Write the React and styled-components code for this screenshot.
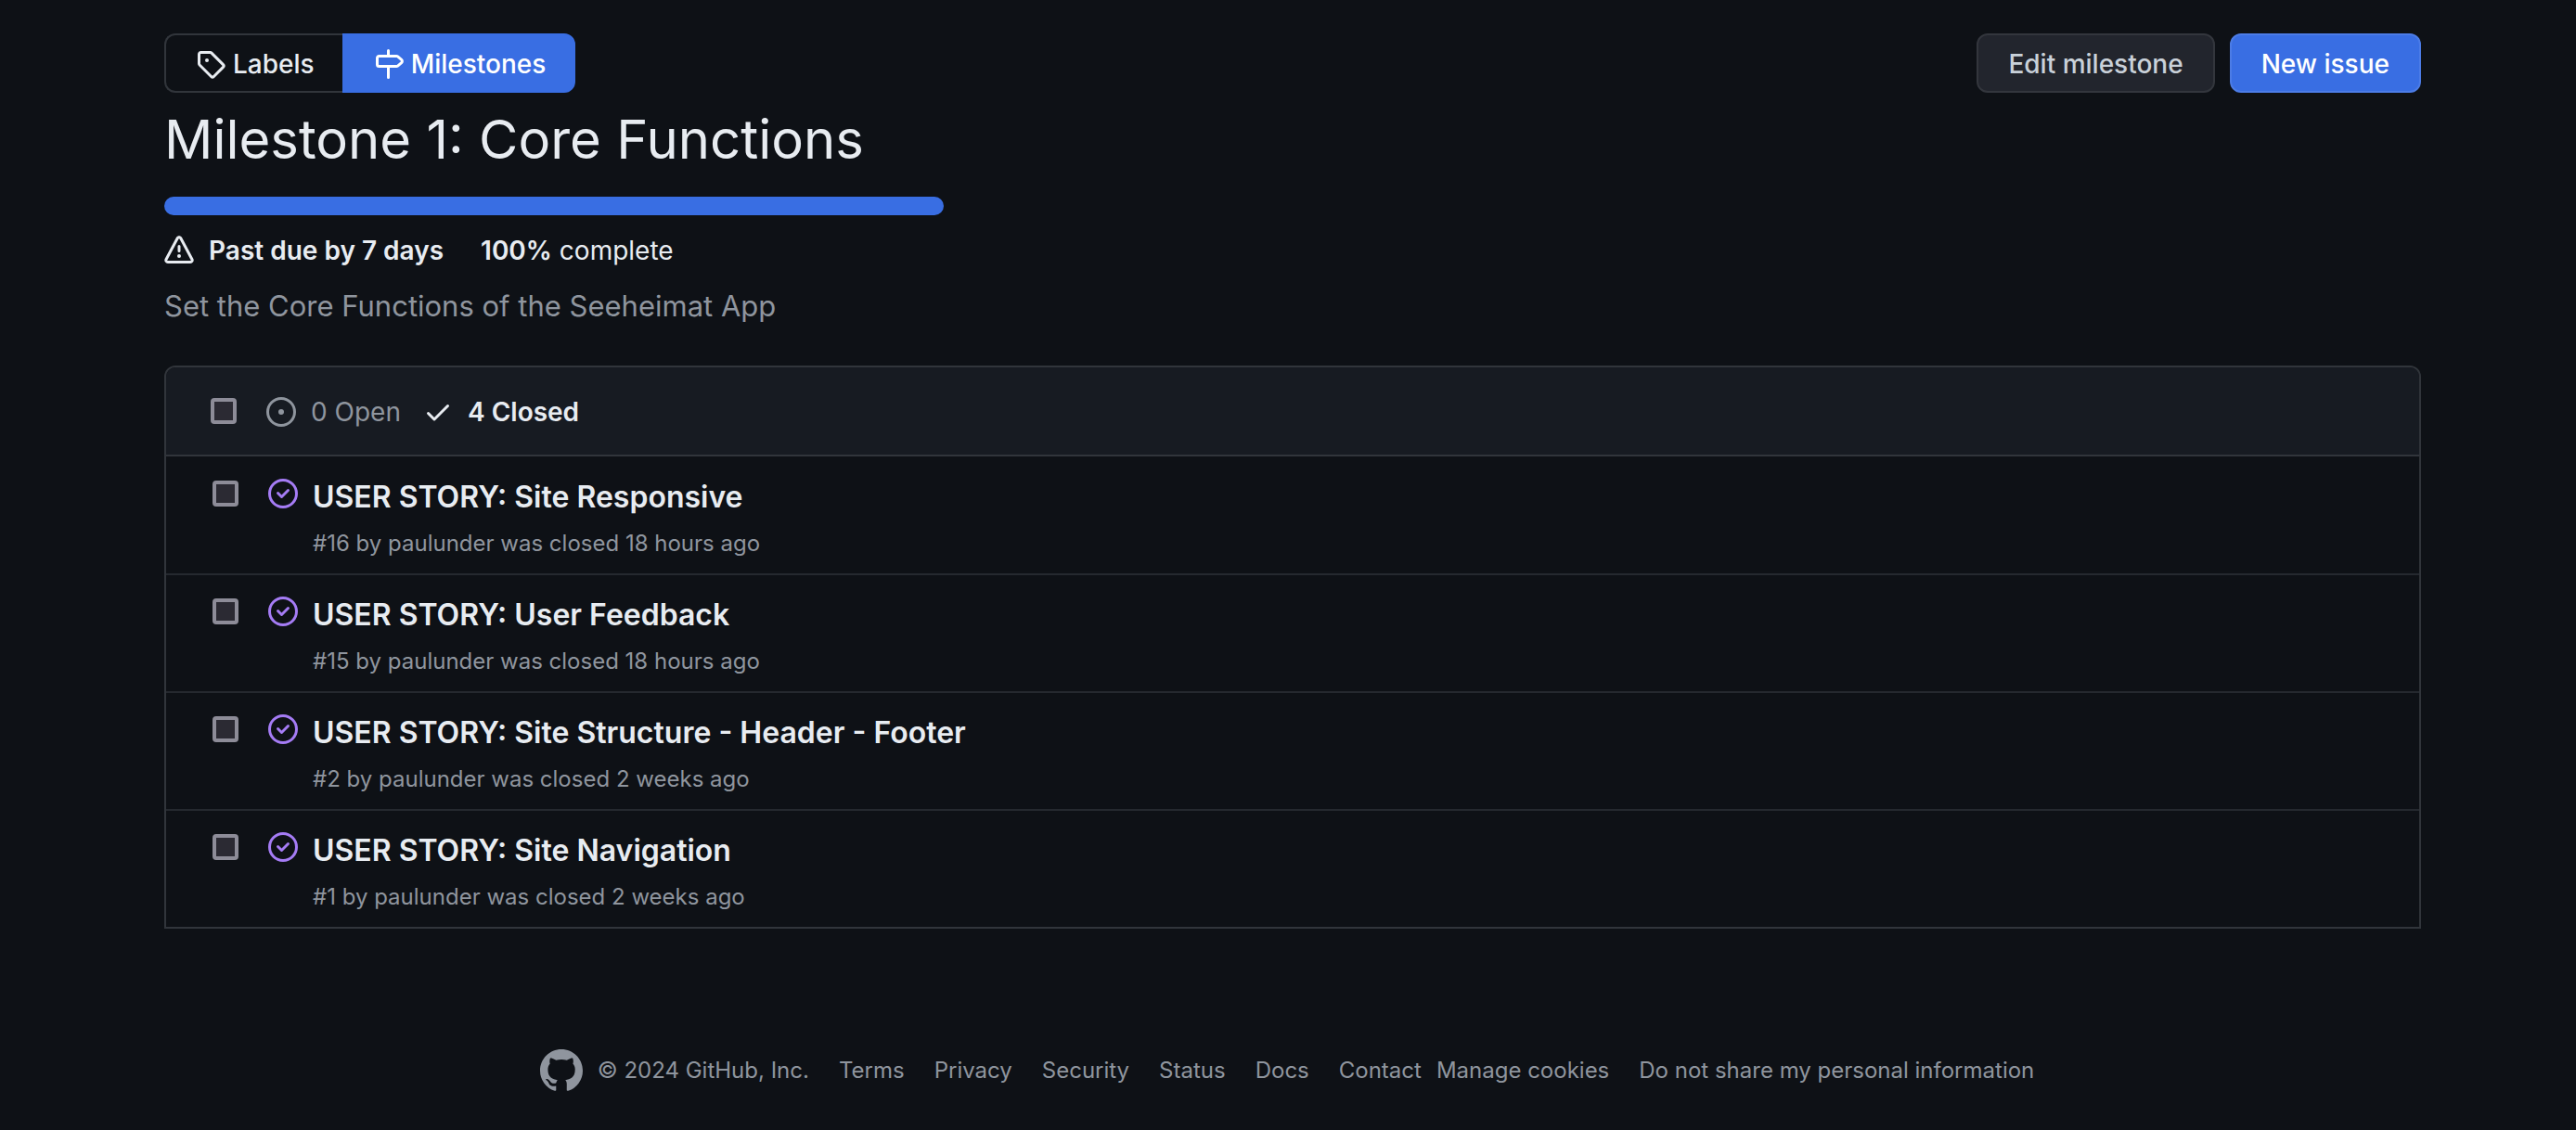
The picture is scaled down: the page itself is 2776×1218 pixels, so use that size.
import React from "react";
import styled, { createGlobalStyle, css } from "styled-components";

const color = {
  canvas: "#0e1116",
  subtle: "#171b22",
  border: "#31353b",
  divider: "#25292f",
  text: "#e8ecf1",
  muted: "#8f959e",
  accent: "#396ee3",
  done: "#a57cf5",
};

const GlobalStyle = createGlobalStyle`
  *, *::before, *::after { box-sizing: border-box; }
  body {
    margin: 0;
    background: ${color.canvas};
    color: ${color.text};
    font-family: Inter, "Liberation Sans", sans-serif;
    font-size: 28px;
    line-height: 40px;
  }
`;

const Page = styled.div`
  max-width: 2560px;
  margin: 0 auto;
  padding: 36px 59px 32px 69px;
`;

const Toolbar = styled.header`
  display: flex;
  flex-wrap: wrap;
  justify-content: space-between;
  gap: 16px;
`;

const Group = styled.nav`
  display: flex;
`;

const Actions = styled.div`
  display: flex;
  gap: 16px;
`;

const controlBase = css`
  display: inline-flex;
  align-items: center;
  gap: 8px;
  height: 64px;
  padding: 2px 32px 0;
  border: 2px solid ${color.border};
  font-family: inherit;
  font-size: 28px;
  font-weight: 550;
  line-height: 40px;
  text-decoration: none;
  white-space: nowrap;
`;

const Tab = styled.a`
  ${controlBase}
  color: ${(p) => (p.$selected ? "#ffffff" : color.text)};
  background: ${(p) => (p.$selected ? color.accent : "transparent")};
  ${(p) => p.$selected && `border-color: ${color.accent};`}
  &:first-child {
    padding-right: 30px;
    border-radius: 12px 0 0 12px;
    border-right: 0;
  }
  &:last-child {
    padding-right: 30px;
    border-radius: 0 12px 12px 0;
  }
`;

const Button = styled.button`
  ${controlBase}
  border-radius: 12px;
  cursor: pointer;
  color: ${(p) => (p.$primary ? "#ffffff" : "#c9d1d9")};
  background: ${(p) => (p.$primary ? color.accent : "#22252d")};
  border-color: ${(p) => (p.$primary ? "#4c7ce6" : "#33363d")};
`;

const Icon = styled.svg`
  display: block;
  flex: none;
  width: ${(p) => p.$size || 32}px;
  height: ${(p) => p.$size || 32}px;
  fill: currentColor;
`;

const Title = styled.h1`
  margin: 8px 0 0;
  font-size: 58px;
  font-weight: 400;
  line-height: 84px;
`;

const Progress = styled.div`
  width: 840px;
  max-width: 100%;
  height: 20px;
  margin-top: 20px;
  border-radius: 12px;
  background: ${color.border};
  overflow: hidden;
`;

const ProgressFill = styled.div`
  height: 100%;
  background: ${color.accent};
`;

const Stats = styled.div`
  display: flex;
  align-items: center;
  gap: 40px;
  margin-top: 18px;
  font-size: 28px;
  line-height: 40px;
`;

const Due = styled.strong`
  display: flex;
  align-items: center;
  gap: 16px;
  font-weight: 600;
`;

const Strong = styled.strong`
  font-weight: 600;
`;

const Description = styled.p`
  margin: 16px 0 0;
  color: ${color.muted};
  font-size: 31px;
  line-height: 48px;
`;

const Box = styled.section`
  margin-top: 40px;
  border: 2px solid ${color.border};
  border-radius: 12px 12px 0 0;
`;

const BoxHeader = styled.div`
  display: flex;
  align-items: center;
  height: 96px;
  padding: 0 48px;
  border-bottom: 2px solid ${color.border};
  border-radius: 10px 10px 0 0;
  background: ${color.subtle};
`;

const States = styled.div`
  display: flex;
  gap: 24px;
  margin-left: 32px;
  padding-top: 2px;
`;

const StateLink = styled.a`
  display: flex;
  align-items: center;
  gap: 16px;
  color: ${(p) => (p.$selected ? color.text : color.muted)};
  font-size: 28px;
  font-weight: ${(p) => (p.$selected ? 600 : 400)};
  text-decoration: none;
`;

const Checkbox = styled.input.attrs({ type: "checkbox" })`
  appearance: none;
  flex: none;
  width: 28px;
  height: 28px;
  margin: 0;
  border: 4px solid #8d8c98;
  border-radius: 4px;
  background: #2b2a33;
  &:checked {
    background: ${color.accent};
  }
`;

const List = styled.ul`
  margin: 0;
  padding: 1px 0 0;
  list-style: none;
`;

const Row = styled.li`
  display: flex;
  align-items: flex-start;
  height: 127px;
  padding: 25px 50px 0;
  border-bottom: 2px solid ${color.divider};
  &:last-child {
    height: 125px;
    border-bottom: 0;
  }
`;

const RowState = styled.span`
  margin: -2px 16px 0 32px;
  color: ${color.done};
`;

const RowText = styled.div`
  min-width: 0;
  margin-top: -6px;
`;

const IssueLink = styled.a`
  display: block;
  color: ${color.text};
  font-size: 32px;
  font-weight: 600;
  line-height: 48px;
  text-decoration: none;
`;

const Meta = styled.div`
  margin-top: 8px;
  color: ${color.muted};
  font-size: 24px;
  line-height: 36px;
`;

const Footer = styled.footer`
  display: flex;
  flex-wrap: wrap;
  align-items: center;
  justify-content: center;
  gap: 16px;
  margin-top: 130px;
  padding-right: 12px;
  color: ${color.muted};
  font-size: 24px;
  line-height: 36px;
`;

const LogoLink = styled.a`
  color: inherit;
`;

const FooterLinks = styled.nav`
  display: flex;
  flex-wrap: wrap;
  gap: 32px;
`;

const FooterLink = styled.a`
  color: inherit;
  text-decoration: none;
`;

const icons = {
  tag: "M1 7.775V2.75C1 1.784 1.784 1 2.75 1h5.025c.464 0 .91.184 1.238.513l6.25 6.25a1.75 1.75 0 0 1 0 2.474l-5.026 5.026a1.75 1.75 0 0 1-2.474 0l-6.25-6.25A1.752 1.752 0 0 1 1 7.775Zm1.5 0c0 .066.026.13.073.177l6.25 6.25a.25.25 0 0 0 .354 0l5.025-5.025a.25.25 0 0 0 0-.354l-6.25-6.25a.25.25 0 0 0-.177-.073H2.75a.25.25 0 0 0-.25.25ZM6 5a1 1 0 1 1 0 2 1 1 0 0 1 0-2Z",
  milestone:
    "M7.75 0a.75.75 0 0 1 .75.75V3h3.634c.414 0 .814.147 1.13.414l2.07 1.75a1.75 1.75 0 0 1 0 2.672l-2.07 1.75a1.75 1.75 0 0 1-1.13.414H8.5v5.25a.75.75 0 0 1-1.5 0V10H2.75A1.75 1.75 0 0 1 1 8.25v-3.5C1 3.784 1.784 3 2.75 3H7V.75A.75.75 0 0 1 7.75 0Zm4.384 8.5a.25.25 0 0 0 .161-.06l2.07-1.75a.248.248 0 0 0 0-.38l-2.07-1.75a.25.25 0 0 0-.161-.06H2.75a.25.25 0 0 0-.25.25v3.5c0 .138.112.25.25.25h9.384Z",
  alert:
    "M6.457 1.047c.659-1.234 2.427-1.234 3.086 0l6.082 11.378A1.75 1.75 0 0 1 14.082 15H1.918a1.75 1.75 0 0 1-1.543-2.575Zm1.763.707a.25.25 0 0 0-.44 0L1.698 13.132a.25.25 0 0 0 .22.368h12.164a.25.25 0 0 0 .22-.368Zm.53 3.996v2.5a.75.75 0 0 1-1.5 0v-2.5a.75.75 0 0 1 1.5 0ZM9 11a1 1 0 1 1-2 0 1 1 0 0 1 2 0Z",
  opened:
    "M8 9.5a1.5 1.5 0 1 0 0-3 1.5 1.5 0 0 0 0 3ZM8 0a8 8 0 1 1 0 16A8 8 0 0 1 8 0ZM1.5 8a6.5 6.5 0 1 0 13 0 6.5 6.5 0 0 0-13 0Z",
  check:
    "M13.78 4.22a.75.75 0 0 1 0 1.06l-7.25 7.25a.75.75 0 0 1-1.06 0L2.22 9.28a.751.751 0 0 1 .018-1.042.751.751 0 0 1 1.042-.018L6 10.94l6.72-6.72a.75.75 0 0 1 1.06 0Z",
  closed:
    "M11.28 6.78a.75.75 0 0 0-1.06-1.06L7.25 8.69 5.78 7.22a.75.75 0 0 0-1.06 1.06l2 2a.75.75 0 0 0 1.06 0l3.5-3.5ZM16 8A8 8 0 1 1 0 8a8 8 0 0 1 16 0Zm-1.5 0a6.5 6.5 0 1 0-13 0 6.5 6.5 0 0 0 13 0Z",
  github:
    "M8 0c4.42 0 8 3.58 8 8a8.013 8.013 0 0 1-5.45 7.59c-.4.08-.55-.17-.55-.38 0-.27.01-1.13.01-2.2 0-.75-.25-1.23-.54-1.48 1.78-.2 3.65-.88 3.65-3.95 0-.88-.31-1.59-.82-2.15.08-.2.36-1.02-.08-2.12 0 0-.67-.22-2.2.82-.64-.18-1.32-.27-2-.27-.68 0-1.36.09-2 .27-1.53-1.03-2.2-.82-2.2-.82-.44 1.1-.16 1.92-.08 2.12-.51.56-.82 1.28-.82 2.15 0 3.06 1.86 3.75 3.64 3.95-.23.2-.44.55-.51 1.07-.46.21-1.61.55-2.33-.66-.15-.24-.6-.83-1.23-.82-.67.01-.27.38.01.53.34.19.73.9.82 1.13.16.45.68 1.31 2.69.94 0 .67.01 1.3.01 1.49 0 .21-.15.45-.55.38A7.995 7.995 0 0 1 0 8c0-4.42 3.58-8 8-8Z",
};

function Glyph({ name, size }) {
  return (
    <Icon viewBox="0 0 16 16" $size={size} aria-hidden="true">
      <path d={icons[name]} />
    </Icon>
  );
}

const issues = [
  { id: 16, title: "USER STORY: Site Responsive", when: "18 hours ago" },
  { id: 15, title: "USER STORY: User Feedback", when: "18 hours ago" },
  { id: 2, title: "USER STORY: Site Structure - Header - Footer", when: "2 weeks ago" },
  { id: 1, title: "USER STORY: Site Navigation", when: "2 weeks ago" },
];

const siteLinks = ["Terms", "Privacy", "Security", "Status", "Docs", "Contact"];
const privacyLinks = ["Manage cookies", "Do not share my personal information"];
const complete = 100;

export default function App() {
  return (
    <Page>
      <GlobalStyle />
      <Toolbar>
        <Group aria-label="Issue navigation">
          <Tab href="#labels">
            <Glyph name="tag" />
            Labels
          </Tab>
          <Tab href="#milestones" $selected aria-current="page">
            <Glyph name="milestone" />
            Milestones
          </Tab>
        </Group>
        <Actions>
          <Button type="button">Edit milestone</Button>
          <Button type="button" $primary>
            New issue
          </Button>
        </Actions>
      </Toolbar>

      <main>
        <Title>Milestone 1: Core Functions</Title>
        <Progress
          role="progressbar"
          aria-label="Milestone progress"
          aria-valuemin={0}
          aria-valuemax={100}
          aria-valuenow={complete}
        >
          <ProgressFill style={{ width: `${complete}%` }} />
        </Progress>
        <Stats>
          <Due>
            <Glyph name="alert" />
            Past due by 7 days
          </Due>
          <span>
            <Strong>{complete}%</Strong> complete
          </span>
        </Stats>
        <Description>Set the Core Functions of the Seeheimat App</Description>

        <Box>
          <BoxHeader>
            <Checkbox aria-label="Select all issues" />
            <States>
              <StateLink href="#open">
                <Glyph name="opened" />0 Open
              </StateLink>
              <StateLink href="#closed" $selected>
                <Glyph name="check" />4 Closed
              </StateLink>
            </States>
          </BoxHeader>
          <List>
            {issues.map((issue) => (
              <Row key={issue.id}>
                <Checkbox aria-labelledby={`issue-${issue.id}`} />
                <RowState>
                  <Glyph name="closed" />
                </RowState>
                <RowText>
                  <IssueLink id={`issue-${issue.id}`} href={`#issue-${issue.id}`}>
                    {issue.title}
                  </IssueLink>
                  <Meta>
                    #{issue.id} by paulunder was closed {issue.when}
                  </Meta>
                </RowText>
              </Row>
            ))}
          </List>
        </Box>
      </main>

      <Footer>
        <LogoLink href="#home" aria-label="GitHub">
          <Glyph name="github" size={46} />
        </LogoLink>
        <FooterLinks aria-label="Site">
          <span>© 2024 GitHub, Inc.</span>
          {siteLinks.map((label) => (
            <FooterLink key={label} href="#site">
              {label}
            </FooterLink>
          ))}
        </FooterLinks>
        <FooterLinks aria-label="Privacy">
          {privacyLinks.map((label) => (
            <FooterLink key={label} href="#privacy">
              {label}
            </FooterLink>
          ))}
        </FooterLinks>
      </Footer>
    </Page>
  );
}
